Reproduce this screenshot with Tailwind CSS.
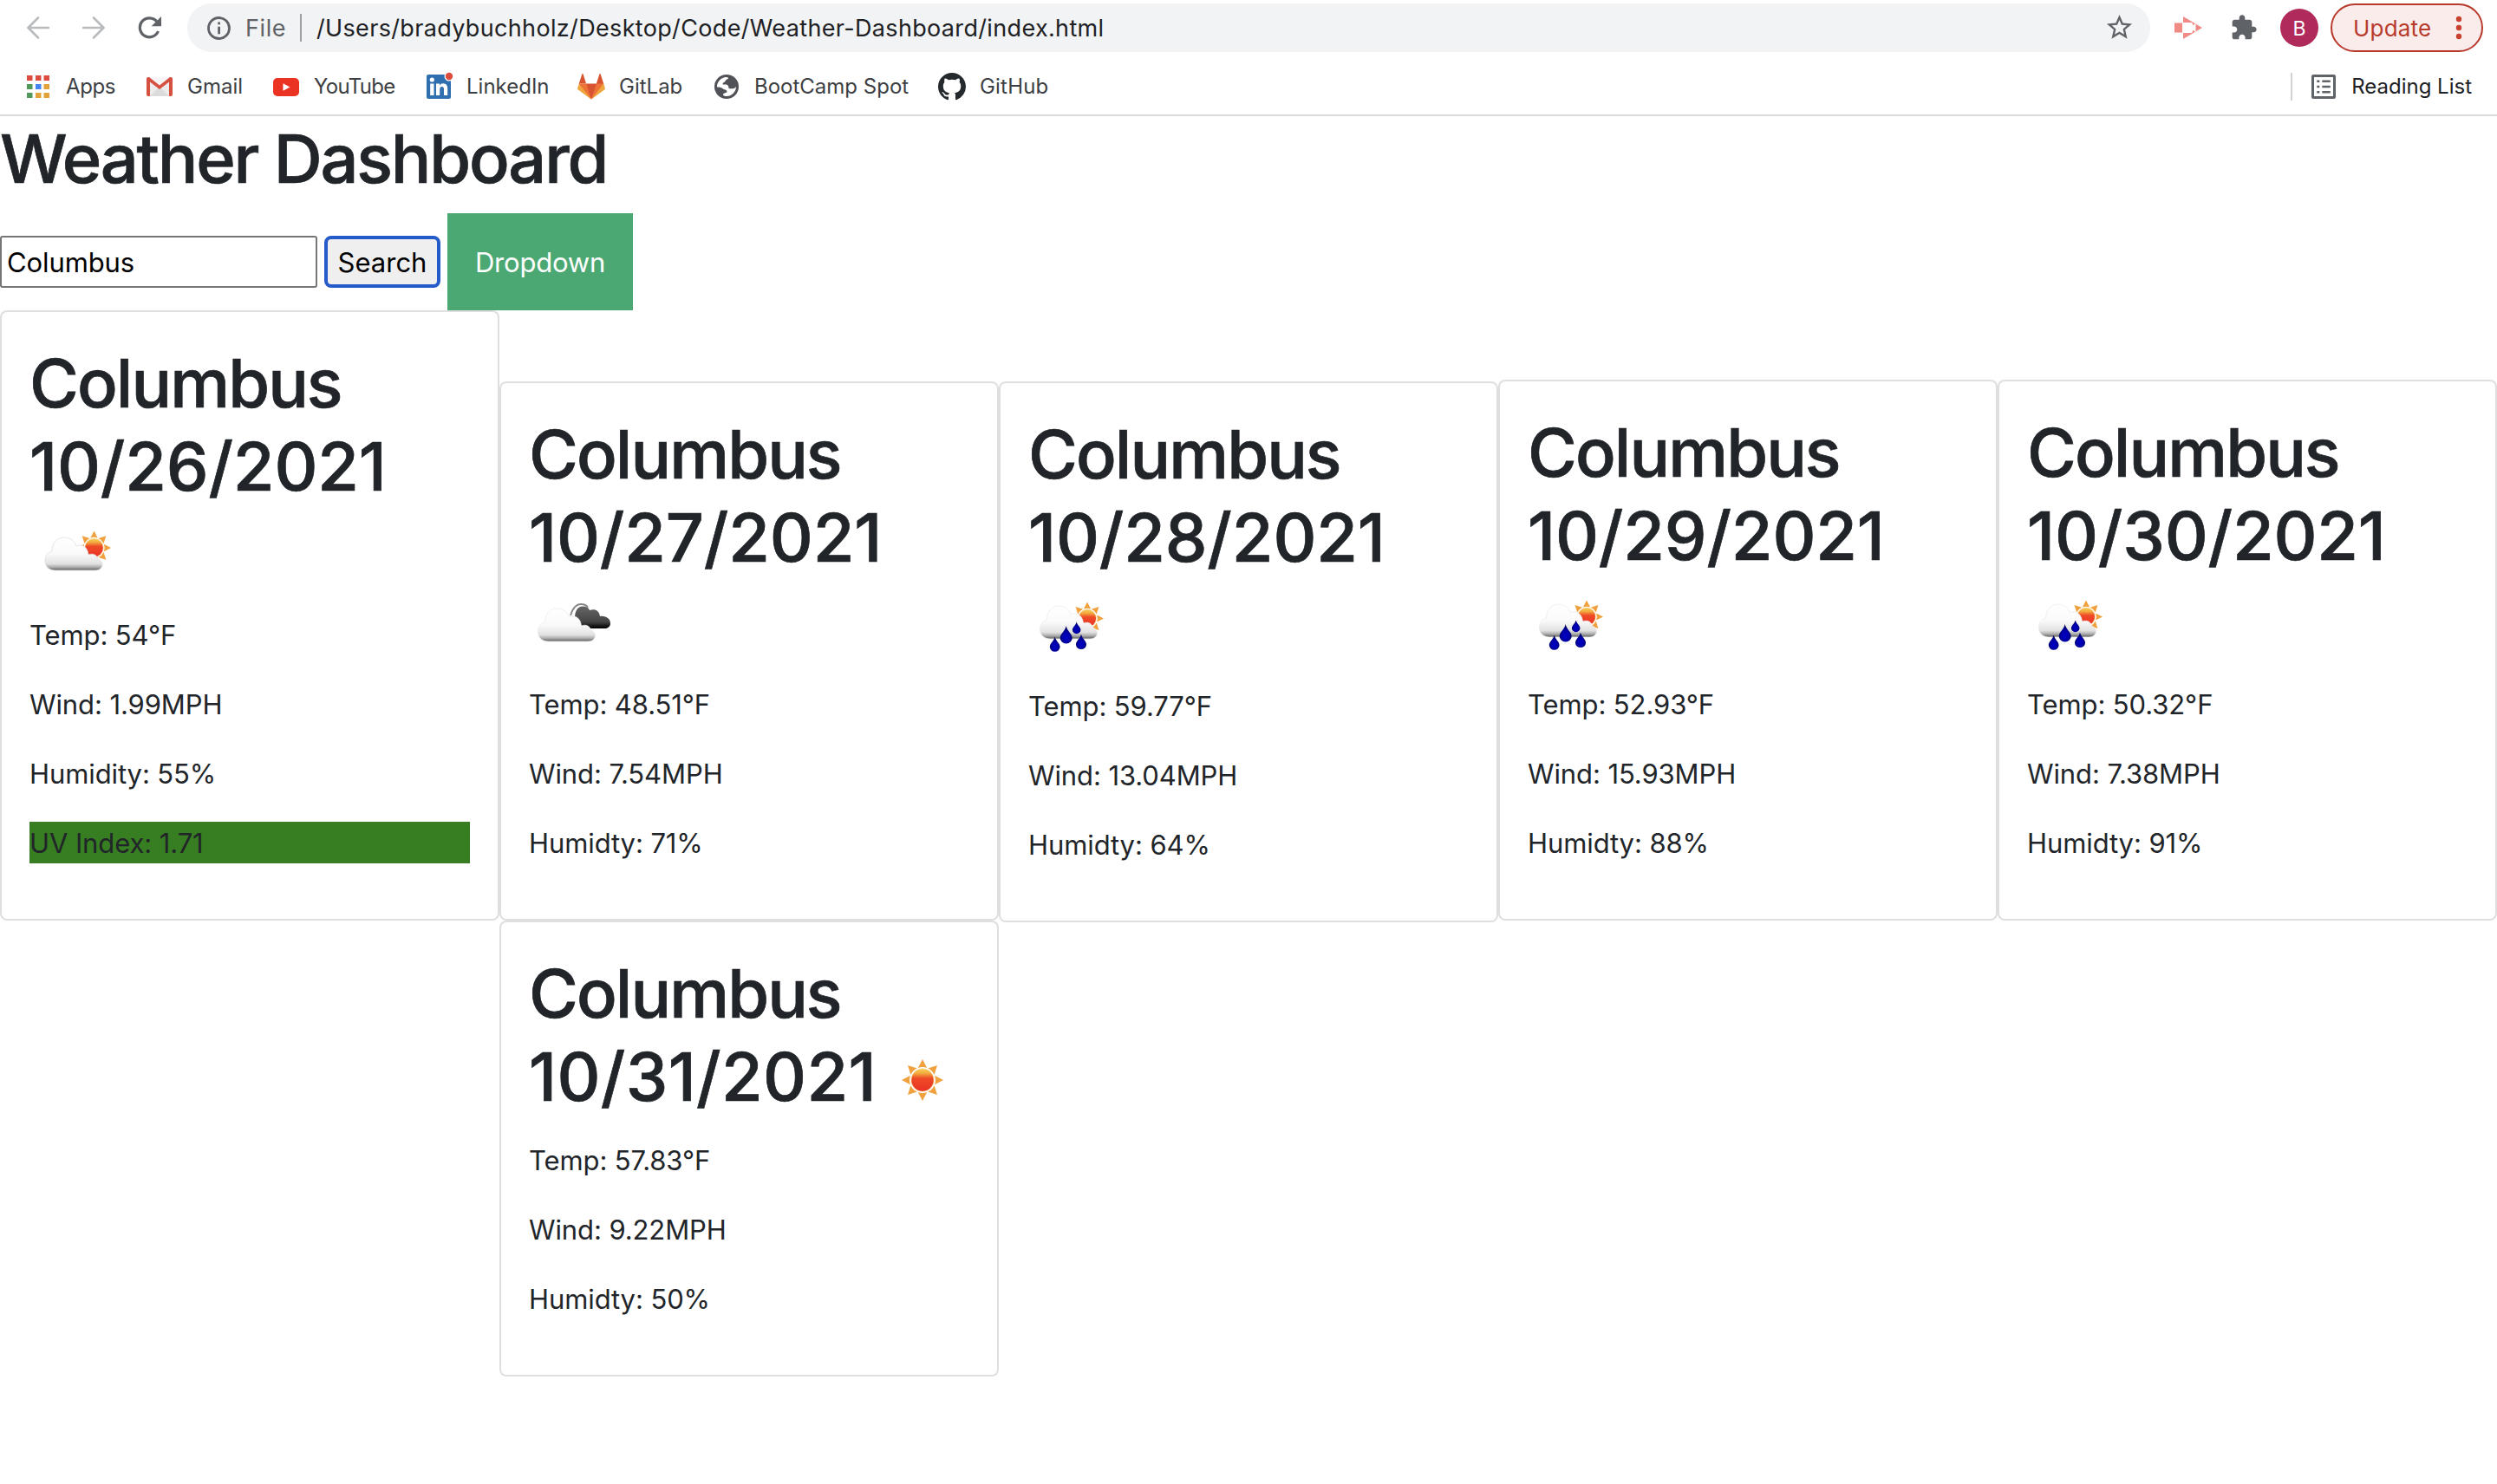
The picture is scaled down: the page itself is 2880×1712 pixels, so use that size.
<!DOCTYPE html>
<html lang="en">
<head>
<meta charset="utf-8">
<title>Weather Dashboard</title>
<script src="https://cdn.jsdelivr.net/npm/@tailwindcss/browser@4"></script>
</head>
<body class="w-[2880px] h-[1712px] overflow-hidden bg-white font-['Inter',sans-serif] text-[31px] leading-[48px] text-[#212529]">

<!-- shared gradients and weather symbols -->
<svg class="absolute w-0 h-0" aria-hidden="true">
  <defs>
    <linearGradient id="cloudFill" x1="0" y1="0" x2="0" y2="1">
      <stop offset="0" stop-color="#fff"/><stop offset=".5" stop-color="#fafafa"/><stop offset=".8" stop-color="#e2e2e2"/><stop offset=".9" stop-color="#b0b0b0"/><stop offset="1" stop-color="#5c5c5c"/>
    </linearGradient>
    <linearGradient id="darkFill" x1="0" y1="0" x2="0" y2="1">
      <stop offset="0" stop-color="#666"/><stop offset=".7" stop-color="#444"/><stop offset="1" stop-color="#000"/>
    </linearGradient>
    <linearGradient id="sunFill" x1="0" y1="0" x2="0" y2="1">
      <stop offset="0" stop-color="#f6cf56"/><stop offset=".2" stop-color="#f3a83e"/><stop offset=".42" stop-color="#ee4a28"/><stop offset="1" stop-color="#ea3323"/>
    </linearGradient>
    <radialGradient id="dropFill" cx=".5" cy=".65" r=".6">
      <stop offset="0" stop-color="#0606c8"/><stop offset=".5" stop-color="#0000a8"/><stop offset="1" stop-color="#00004e"/>
    </radialGradient>
    <filter id="soft" x="-20%" y="-20%" width="140%" height="140%"><feGaussianBlur stdDeviation=".6"/></filter>
    <symbol id="sun" viewBox="-24 -24 48 48">
      <g fill="#f0a03c">
        <g id="rayPair"><path d="M0-24L5.200-14Q0-16-5.200-14Z"/><path d="M0 24L5.200 14Q0 16-5.200 14Z"/></g>
        <use href="#rayPair" transform="rotate(45)"/><use href="#rayPair" transform="rotate(90)"/><use href="#rayPair" transform="rotate(135)"/>
      </g>
      <circle r="13.500" fill="#f8d9a0"/>
      <circle r="12.700" fill="url(#sunFill)"/>
    </symbol>
    <path id="cloud" d="M12 38C5 38 0 34 0 27C0 20 4 17 8 16C8 6 14 0 22 0C29 0 34 4 36 10C43 7 49 11 50 20C55 18 60 20 61 25C64 26 66 29 66 31C66 35 63 38 58 38Z"/>
    <path id="drop" d="M0-10C1-4 7-1 7 4A7 6.500 0 0 1-7 4C-7-1-1-4 0-10Z" fill="url(#dropFill)"/>
    <symbol id="rain" viewBox="0 0 100 100">
      <g filter="url(#soft)">
        <use href="#sun" x="49" y="26.500" width="38" height="38"/>
        <use href="#cloud" transform="translate(13.500 31)" fill="url(#cloudFill)" stroke="#ececec" stroke-width=".8"/>
        <use href="#drop" transform="translate(43.700 64)"/>
        <use href="#drop" transform="translate(55.700 56) scale(.68)"/>
        <use href="#drop" transform="translate(30.700 75) scale(.84)"/>
        <use href="#drop" transform="translate(61 72) scale(.86)"/>
      </g>
    </symbol>
  </defs>
</svg>

<header class="h-[134px] border-b-2 border-[#dadada]">
  <!-- toolbar -->
  <div class="flex h-16 items-center pl-[31px] text-[27px]">
    <svg class="w-[26px] h-[26px]" viewBox="0 0 26 26" fill="none" stroke="#b9bbbe" stroke-width="2.600" stroke-linecap="round" stroke-linejoin="round"><path d="M25 13H2M13 1.500L1.500 13L13 24.500"/></svg>
    <svg class="ml-[38px] w-[26px] h-[26px]" viewBox="0 0 26 26" fill="none" stroke="#b9bbbe" stroke-width="2.600" stroke-linecap="round" stroke-linejoin="round"><path d="M1 13H24M13 1.500L24.500 13L13 24.500"/></svg>
    <svg class="ml-[38px] w-[27px] h-[26px]" viewBox="0 0 27 26"><path d="M23.500 17A11 11 0 1 1 22 6" fill="none" stroke="#5f6368" stroke-width="3.200"/><path d="M27 0V11.300H15.700Z" fill="#5f6368"/></svg>
    <div class="ml-[30px] flex h-14 w-[2264px] items-center rounded-full bg-[#f1f3f4] pl-[23px]">
      <svg class="w-[27px] h-[27px]" viewBox="0 0 27 27"><circle cx="13.500" cy="13.500" r="12" fill="none" stroke="#5f6368" stroke-width="2.800"/><path d="M12.200 6.500h2.800v2.800h-2.800zM12.200 11.800h2.800v8.400h-2.800z" fill="#5f6368"/></svg>
      <span class="ml-[17px] w-[63px] pt-0.5 tracking-[0.6px] text-[#5f6368]">File</span>
      <div class="h-8 w-0.5 bg-[#9da0a4]"></div>
      <span class="ml-[17px] pt-0.5 tracking-[0.34px] text-[#202124]">/Users/bradybuchholz/Desktop/Code/Weather-Dashboard/index.html</span>
      <svg class="ml-auto mr-[18px] -mt-px w-[35px] h-[35px]" viewBox="0 0 24 24" fill="#5f6368"><path d="M22 9.240l-7.190-.620L12 2 9.190 8.630 2 9.240l5.460 4.730L5.820 21 12 17.270 18.180 21l-1.630-7.030L22 9.240zM12 15.400l-3.760 2.270 1-4.280-3.320-2.880 4.380-.380L12 6.100l1.710 4.040 4.380.380-3.320 2.880 1 4.280L12 15.400z"/></svg>
    </div>
    <svg class="ml-7 w-8 h-[26px]" viewBox="0 0 32 26"><path d="M0 7.500H9V18.500H0ZM10 0L32 13L10 26V19H19Q21 19 21 17V15.500L24.500 18V8L21 10.500V9Q21 7 19 7H10Z" fill="#f08a84"/></svg>
    <svg class="ml-8 w-8 h-8" viewBox="0 0 24 24" fill="#5f6368"><path d="M20.500 11H19V7c0-1.100-.9-2-2-2h-4V3.500C13 2.120 11.880 1 10.500 1S8 2.120 8 3.500V5H4c-1.100 0-1.990.9-1.990 2v3.800H3.500c1.490 0 2.700 1.210 2.700 2.700s-1.210 2.700-2.700 2.700H2V20c0 1.100.9 2 2 2h3.800v-1.500c0-1.490 1.210-2.700 2.700-2.700 1.490 0 2.700 1.210 2.700 2.700V22H17c1.100 0 2-.9 2-2v-4h1.500c1.380 0 2.500-1.120 2.500-2.500S21.880 11 20.500 11z"/></svg>
    <div class="ml-[26px] flex h-11 w-11 items-center justify-center rounded-full bg-[#b02a5b] pt-px text-[23px] text-white">B</div>
    <div class="ml-[14px] flex h-14 w-44 items-center rounded-full border-2 border-[#b83a2b] bg-[#f9eceb] pl-6 text-[26px] text-[#b83a2b]">
      <span class="pt-0.5 tracking-[0.2px]">Update</span>
      <svg class="ml-7 w-2 h-7" viewBox="0 0 8 28" fill="#c8402f"><circle cx="4" cy="4" r="3.200"/><circle cx="4" cy="14" r="3.200"/><circle cx="4" cy="24" r="3.200"/></svg>
    </div>
  </div>

  <!-- bookmarks -->
  <div class="flex h-[68px] items-center pt-1 pl-[31px] text-2xl leading-8 text-[#3c4043]">
    <div class="flex w-[138px] items-center">
      <svg class="w-[26px] h-[26px]" viewBox="0 0 26 26"><path d="M0 0h6.500v6H0zM10 0h6.500v6H10zM19.500 0H26v6h-6.500z" fill="#dd4b3e"/><path d="M0 10h6.500v6H0zM0 20h6.500v6H0z" fill="#4f9a5b"/><path d="M10 10h6.500v6H10z" fill="#4285f4"/><path d="M19.500 10H26v6h-6.500zM10 20h6.500v6H10zM19.500 20H26v6h-6.500z" fill="#e2a33b"/></svg>
      <span class="ml-[19px] -mt-px tracking-[-0.4px]">Apps</span>
    </div>
    <div class="flex w-[146px] items-center">
      <svg class="w-[30px] h-[22px]" viewBox="0 0 30 22"><rect x="1" width="28" height="22" rx="2" fill="#ececec"/><path d="M4 22L15 11L26 22Z" fill="#dcdcdc"/><path d="M4 2L15 12L26 2V0H4Z" fill="#f5f5f5"/><path d="M0 2Q0 0 2 0H3L15 9.500L27 0H28Q30 0 30 2V20Q30 22 28 22H26V5.500L15 14L4 5.500V22H2Q0 22 0 20Z" fill="#d5503f"/></svg>
      <span class="ml-[17px] -mt-px">Gmail</span>
    </div>
    <div class="flex w-[177px] items-center">
      <svg class="w-[30px] h-[21px]" viewBox="0 0 30 21"><rect width="30" height="21" rx="5" fill="#ea3323"/><path d="M11.500 6.300L19.500 10.500L11.500 14.700Z" fill="#fff"/></svg>
      <span class="ml-[17px] -mt-px tracking-[-0.7px]">YouTube</span>
    </div>
    <div class="flex w-[174px] items-center">
      <svg class="w-[31px] h-[32px] -mt-0.5" viewBox="0 0 31 32"><rect y="3" width="28" height="28" rx="2" fill="#2f6fb0"/><g fill="#fff"><circle cx="6.300" cy="9" r="2.600"/><path d="M4.200 13.500h4.300V27H4.200zM11 13.500h4v1.900q1.500-2.200 4.200-2.200 5 0 5 6V27h-4.200v-7q0-3-2.300-3-2.500 0-2.500 3.200V27H11z"/></g><circle cx="26" cy="5" r="5.500" fill="#fff"/><circle cx="26" cy="5" r="4.200" fill="#dd4b3e"/></svg>
      <span class="ml-[15px] -mt-px">LinkedIn</span>
    </div>
    <div class="flex w-[158px] items-center">
      <svg class="w-8 h-8" viewBox="0 0 36 36"><path fill="#d8532f" d="M2 14l9.380 9v-9l-4-12.280c-.205-.632-1.176-.632-1.380 0zM34 14l-9.380 9v-9l4-12.280c.205-.632 1.176-.632 1.380 0zM18 34.380L3 14H33Z"/><path fill="#ec7238" d="M18 34.380L11.380 14H2L6 25ZM18 34.380L24.620 14H34L30 25Z"/><path fill="#f0a63e" d="M2 14L.1 20.160c-.180.565 0 1.200.5 1.560l17.420 12.660zM34 14l1.900 6.160c.180.565 0 1.200-.5 1.560L18 34.380z"/></svg>
      <span class="ml-[16px] -mt-px">GitLab</span>
    </div>
    <div class="flex w-[258px] items-center">
      <svg class="w-7 h-7" viewBox="0 0 28 28"><circle cx="14" cy="14" r="14" fill="#505257"/><path d="M3 13C3.500 8 7.500 4 12.500 3C15 2.600 16.500 3.500 16 4.500C15 6 13 5.500 12.500 7.500C12.200 9 10 9 9.500 10.500C9.300 12 11 11.500 13 11.500C16 11.500 16.500 14 16.500 16C18.500 16 20.500 17 23.500 15.500L25 14C25 20 20 25 14 25C12 25 10 24.500 10 23C10.500 21 14.500 21.500 14.500 19.500C14.500 17.500 12 18 10 16.500C8 15 7 14.500 3 14.500Z" fill="#fff"/></svg>
      <span class="ml-[18px] -mt-px">BootCamp Spot</span>
    </div>
    <div class="flex items-center">
      <svg class="w-8 h-8" viewBox="0 0 16 16" fill="#24292e"><path d="M8 0C3.580 0 0 3.580 0 8c0 3.540 2.290 6.530 5.470 7.590.4.070.55-.17.55-.38 0-.19-.01-.82-.01-1.490-2.010.37-2.530-.49-2.690-.94-.09-.23-.48-.94-.82-1.130-.28-.15-.68-.52-.01-.53.63-.01 1.080.58 1.230.82.72 1.210 1.870.87 2.330.66.070-.52.28-.87.51-1.070-1.780-.2-3.640-.89-3.640-3.950 0-.87.31-1.590.82-2.150-.08-.2-.36-1.020.08-2.120 0 0 .67-.21 2.200.82.64-.18 1.320-.27 2-.27s1.360.09 2 .27c1.530-1.040 2.200-.82 2.200-.82.44 1.100.16 1.920.08 2.120.51.56.82 1.270.82 2.150 0 3.070-1.870 3.750-3.650 3.950.29.25.54.73.54 1.480 0 1.070-.01 1.930-.01 2.200 0 .21.15.46.55.38A8.010 8.010 0 0 0 16 8c0-4.420-3.580-8-8-8z"/></svg>
      <span class="ml-[16px] -mt-px tracking-[0.2px]">GitHub</span>
    </div>
    <div class="ml-auto flex items-center pr-[29px] text-[#202124]">
      <div class="h-8 w-0.5 bg-[#d0d2d5]"></div>
      <svg class="ml-[22px] w-7 h-7" viewBox="0 0 28 28"><rect x="1.500" y="1.500" width="25" height="25" rx=".5" fill="none" stroke="#5f6368" stroke-width="3"/><path d="M6.300 6.500h3v2.600h-3zM12.300 6.500h9.500v2.600h-9.500zM6.300 12.700h3v2.600h-3zM12.300 12.700h9.500v2.600h-9.500zM6.300 18.900h3v2.600h-3zM12.300 18.900h9.500v2.600h-9.500z" fill="#5f6368"/></svg>
      <span class="ml-[18px] -mt-px">Reading List</span>
    </div>
  </div>
</header>

<main>
  <h1 class="h-28 pt-px text-[77.5px] leading-[96px] font-medium [-webkit-text-stroke:0.7px] tracking-[-2.2px]">Weather Dashboard</h1>

  <div class="flex h-28 items-center">
    <div class="flex h-[60px] w-[366px] items-center rounded-[3px] border-2 border-[#767676] bg-white pl-[6px] pt-0.5 tracking-[-0.1px] text-black">Columbus</div>
    <button class="ml-2 flex h-[60px] w-[134px] items-center justify-center rounded-lg border-4 border-[#245ac9] bg-[#efefef] pt-0.5 text-black">Search</button>
    <button class="ml-2 h-28 w-[214px] bg-[#4ca873] pt-0.5 tracking-[-0.2px] text-white">Dropdown</button>
  </div>

  <div class="grid grid-cols-5 items-start tracking-[-0.1px]">
    <section class="h-[704px] rounded-lg border-2 border-[#dfdfdf] p-8">
      <h1 class="mb-[17px] h-[300px] pt-0.5 text-[77.5px] leading-[96px] font-medium [-webkit-text-stroke:0.7px]">
        <span class="block tracking-[-1.9px]">Columbus</span>
        <span class="block tracking-[-0.2px]">10/26/2021</span>
        <svg class="w-[100px] h-[100px]" viewBox="0 0 100 100">
          <g filter="url(#soft)">
            <use href="#sun" x="55" y="26.500" width="39" height="39"/>
            <use href="#cloud" transform="translate(18 34)" fill="url(#cloudFill)" stroke="#dedede" stroke-width=".8"/>
          </g>
        </svg>
      </h1>
      <p class="mb-8">Temp: 54°F</p>
      <p class="mb-8">Wind: 1.99MPH</p>
      <p class="mb-[31px]">Humidity: 55%</p>
      <p class="h-12 bg-[#377e22] pt-px">UV Index: 1.71</p>
    </section>

    <div class="mt-[82px] flex flex-col">
      <section class="h-[622px] rounded-lg border-2 border-[#dfdfdf] p-8">
        <h1 class="mb-[17px] h-[298px] pt-0.5 text-[77.5px] leading-[96px] font-medium [-webkit-text-stroke:0.7px]">
          <span class="block tracking-[-1.9px]">Columbus</span>
          <span class="block tracking-[-0.2px]">10/27/2021</span>
          <svg class="w-[100px] h-[100px]" viewBox="0 0 100 100">
            <g filter="url(#soft)">
              <path d="M48 42Q52 29 60 29Q66 29 68 33" fill="none" stroke="#888" stroke-width="1.800"/>
              <path d="M53 45C53 37 56 31.500 62 31.500C66 31.500 69 33 70 36C76 34 81 36 82 43C89 42 94 46 94 51C94 55 91 57 87 57H62Z" fill="url(#darkFill)"/>
              <use href="#cloud" transform="translate(10.500 34)" fill="url(#cloudFill)" stroke="#ececec" stroke-width=".8"/>
            </g>
          </svg>
        </h1>
        <p class="mb-8">Temp: 48.51°F</p>
        <p class="mb-8">Wind: 7.54MPH</p>
        <p>Humidty: 71%</p>
      </section>
      <section class="h-[526px] rounded-lg border-2 border-[#dfdfdf] p-8">
        <h1 class="mb-[17px] h-[202px] pt-0.5 text-[77.5px] leading-[96px] font-medium [-webkit-text-stroke:0.7px]">
          <span class="block tracking-[-1.9px]">Columbus</span>
          <span class="flex items-start tracking-[0.3px]">10/31/2021
            <svg class="ml-[3px] mt-0.5 w-[100px] h-[100px]" viewBox="0 0 100 100"><g filter="url(#soft)"><use href="#sun" x="26" y="26" width="48" height="48"/></g></svg>
          </span>
        </h1>
        <p class="mb-8">Temp: 57.83°F</p>
        <p class="mb-8">Wind: 9.22MPH</p>
        <p>Humidty: 50%</p>
      </section>
    </div>

    <section class="mt-[82px] h-[624px] rounded-lg border-2 border-[#dfdfdf] p-8">
      <h1 class="mb-[17px] h-[300px] pt-0.5 text-[77.5px] leading-[96px] font-medium [-webkit-text-stroke:0.7px]">
        <span class="block tracking-[-1.9px]">Columbus</span>
        <span class="block tracking-[-0.2px]">10/28/2021</span>
        <svg class="w-[100px] h-[100px]"><use href="#rain"/></svg>
      </h1>
      <p class="mb-8">Temp: 59.77°F</p>
      <p class="mb-8">Wind: 13.04MPH</p>
      <p>Humidty: 64%</p>
    </section>

    <section class="mt-20 h-[624px] rounded-lg border-2 border-[#dfdfdf] p-8">
      <h1 class="mb-[17px] h-[300px] pt-0.5 text-[77.5px] leading-[96px] font-medium [-webkit-text-stroke:0.7px]">
        <span class="block tracking-[-1.9px]">Columbus</span>
        <span class="block tracking-[-0.2px]">10/29/2021</span>
        <svg class="w-[100px] h-[100px]"><use href="#rain"/></svg>
      </h1>
      <p class="mb-8">Temp: 52.93°F</p>
      <p class="mb-8">Wind: 15.93MPH</p>
      <p>Humidty: 88%</p>
    </section>

    <section class="mt-20 h-[624px] rounded-lg border-2 border-[#dfdfdf] p-8">
      <h1 class="mb-[17px] h-[300px] pt-0.5 text-[77.5px] leading-[96px] font-medium [-webkit-text-stroke:0.7px]">
        <span class="block tracking-[-1.9px]">Columbus</span>
        <span class="block tracking-[-0.2px]">10/30/2021</span>
        <svg class="w-[100px] h-[100px]"><use href="#rain"/></svg>
      </h1>
      <p class="mb-8">Temp: 50.32°F</p>
      <p class="mb-8">Wind: 7.38MPH</p>
      <p>Humidty: 91%</p>
    </section>
  </div>
</main>
</body>
</html>
